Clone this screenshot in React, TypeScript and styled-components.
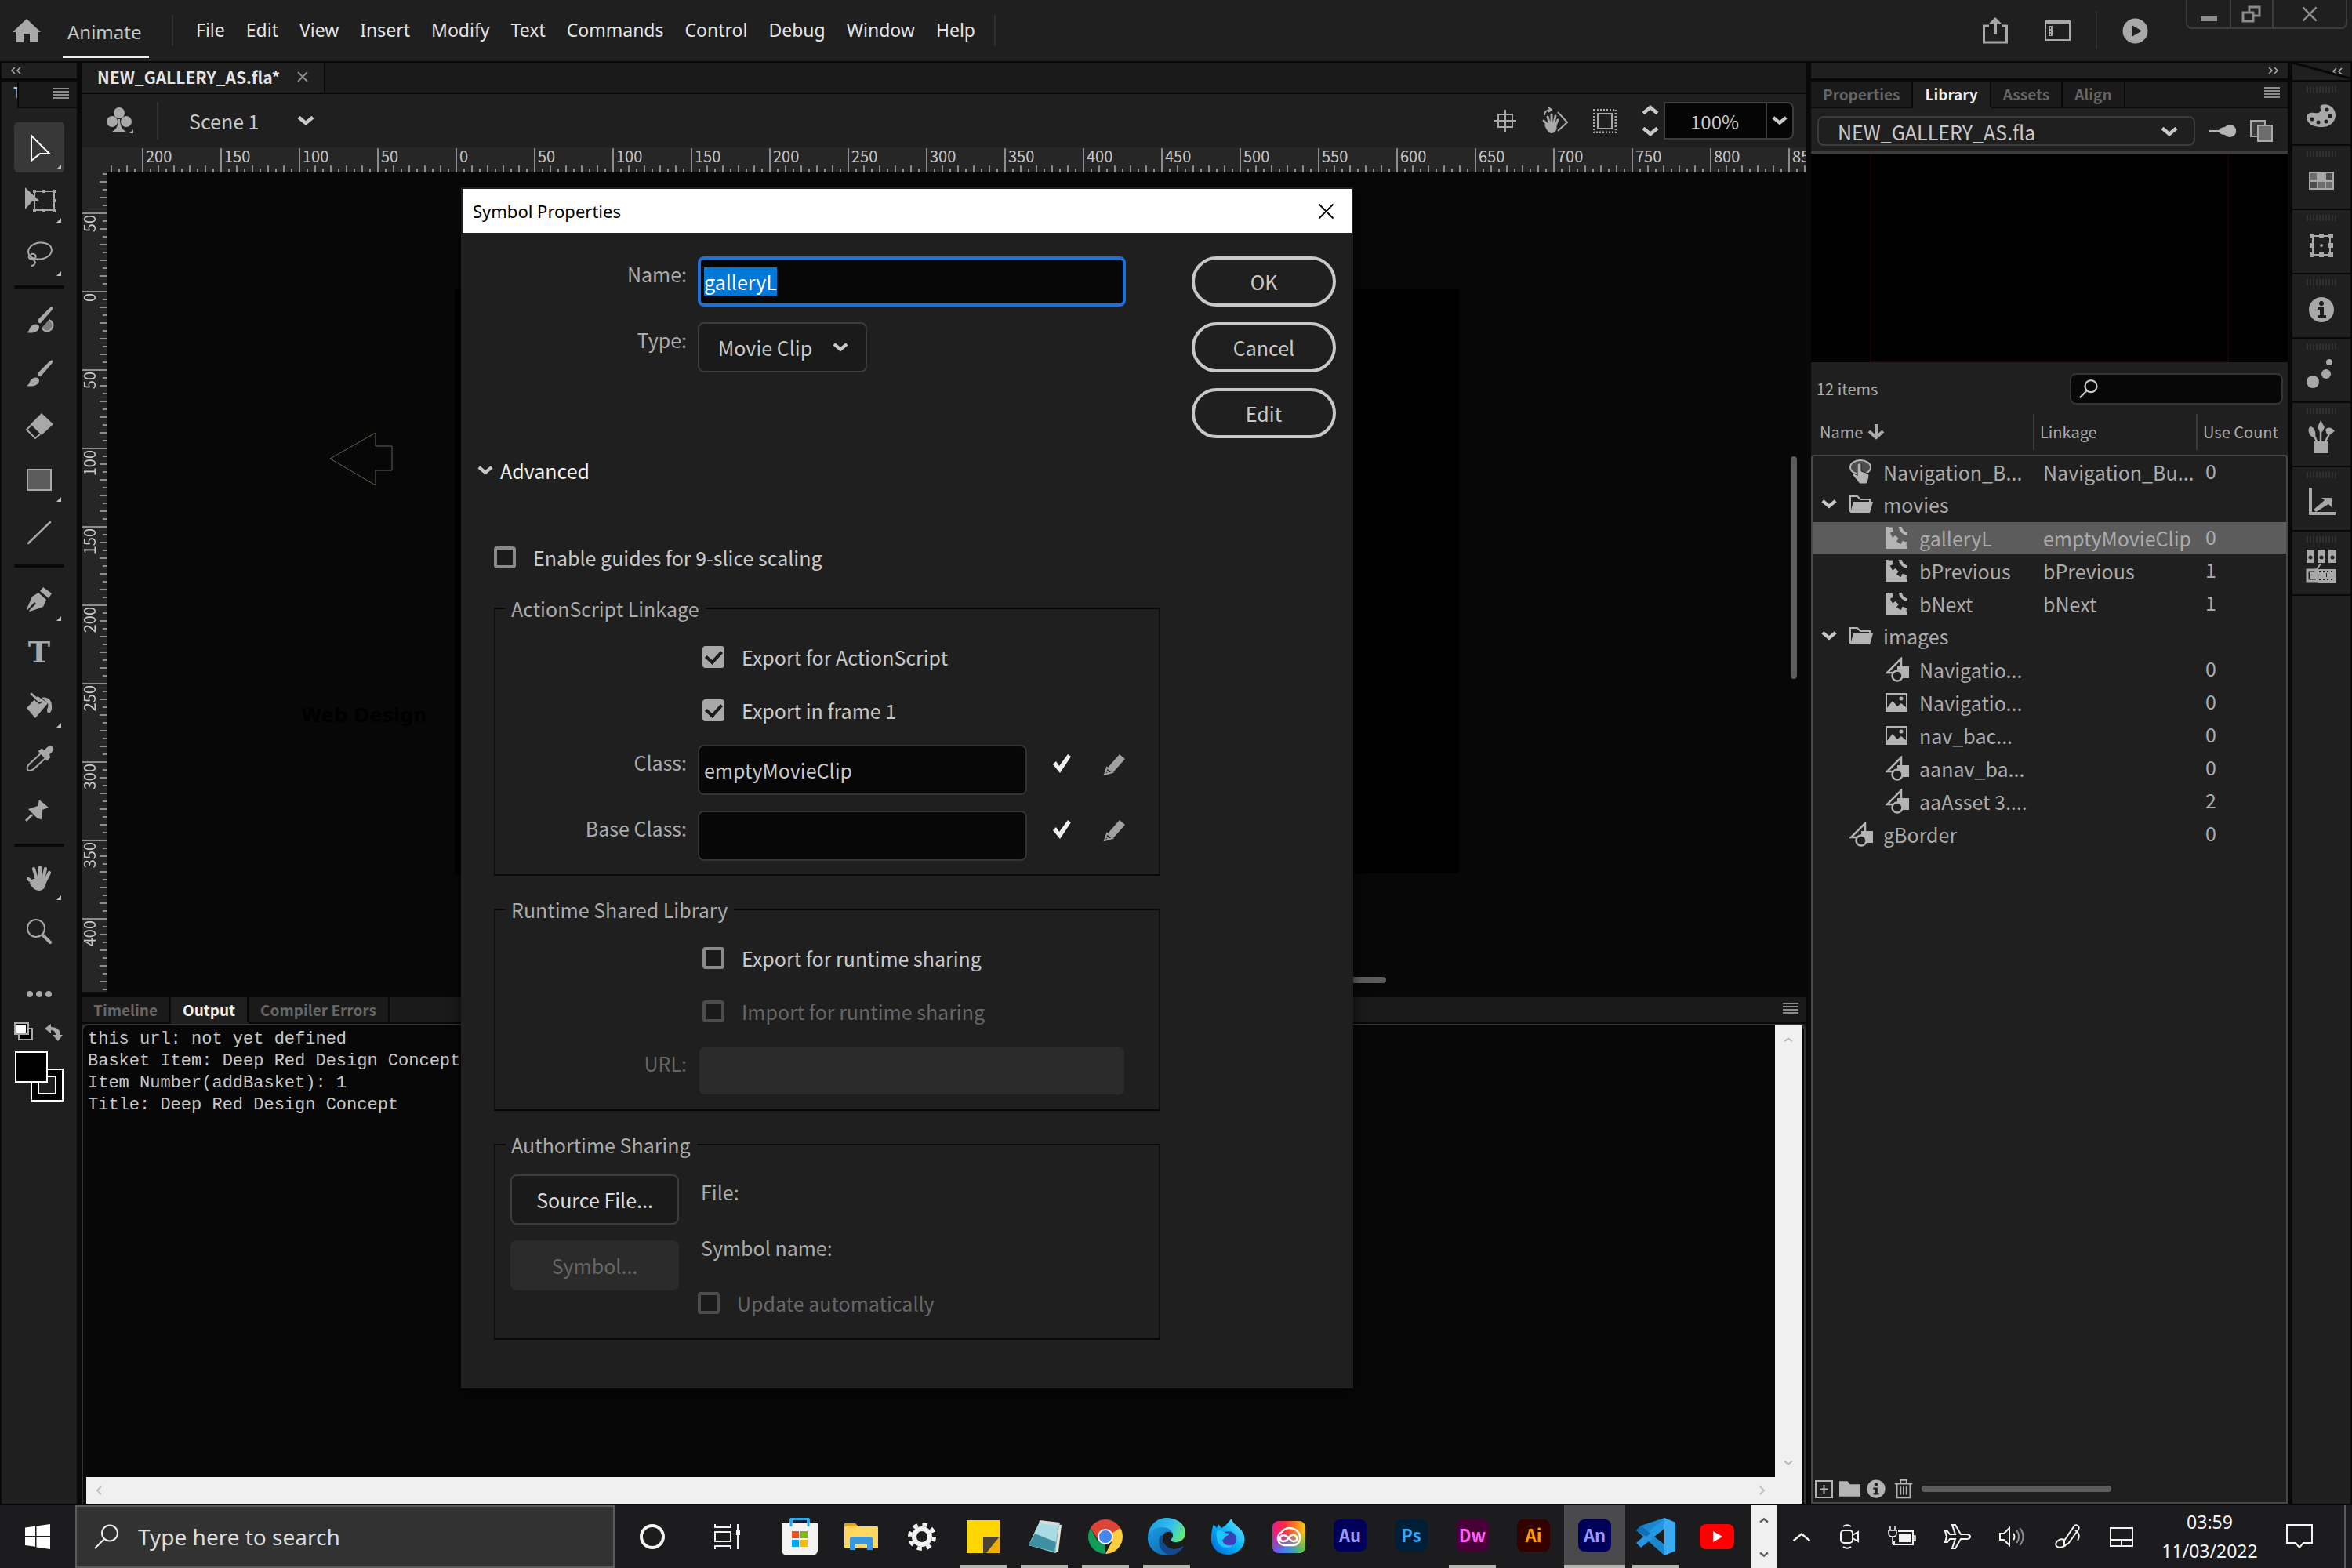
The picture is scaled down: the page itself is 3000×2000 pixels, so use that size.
import React, { useEffect, useId, useRef, useState } from 'react';
import styled, { createGlobalStyle, css } from 'styled-components';

const clean = '"Noto Sans CJK JP", "Open Sans", sans-serif';
const segoe = '"Noto Sans", "Open Sans", sans-serif';

const c = {
  panel: '#1f1f1f',
  strip: '#1a1a1a',
  gap: '#080808',
  line: '#3c3c3c',
  icon: '#a8a8a8',
  text: '#c8c8c8',
  dim: '#ababab',
  off: '#666666',
};

const Global = createGlobalStyle`
  * { box-sizing: border-box; }
  html, body, #root { margin: 0; height: 100%; background: ${c.gap}; }
  body { font-family: ${clean}; font-size: 25px; line-height: 36px; color: ${c.text}; overflow: hidden; }
  button, input, select { font: inherit; color: inherit; margin: 0; }
  button { background: none; border: 0; padding: 0; text-align: center; }
  svg { display: block; flex: none; }
`;

const Screen = styled.div`
  position: relative;
  display: flex;
  flex-direction: column;
  height: 100vh;
  min-width: 0;
`;

/* ---------- menu bar ---------- */

const MenuBar = styled.header`
  display: flex;
  align-items: center;
  height: 78px;
  flex: none;
  background: ${c.panel};
  padding-left: 16px;
  font-family: ${segoe};
`;
const AppName = styled.div`
  align-self: stretch;
  margin-left: 28px;
  padding: 4px 6px 0;
  width: 110px;
  border-bottom: 2px solid #f0f0f0;
  margin-bottom: 4px;
  font-size: 24px;
  line-height: 74px;
`;
const Rule = styled.i<{ $h: number; $gap?: number }>`
  width: 2px;
  height: ${p => p.$h}px;
  margin: 0 ${p => p.$gap ?? 29}px;
  background: #303030;
`;
const Menus = styled.nav`
  display: flex;
  gap: 27px;
  font-size: 23px;
  line-height: 32px;
  padding-bottom: 2px;
  color: #e4e4e4;
`;
const BarIcons = styled.div`
  display: flex;
  align-items: center;
  margin-left: auto;
`;
const IconButton = styled.button<{ $mr?: number }>`
  display: flex;
  align-items: center;
  justify-content: center;
  color: ${c.icon};
  margin-right: ${p => p.$mr ?? 0}px;
`;
const WindowButtons = styled.div`
  display: flex;
  align-self: flex-start;
  height: 37px;
  margin: 0 6px 0 48px;
  border: 2px solid ${c.line};
  border-top: 0;
  border-radius: 0 0 8px 8px;
`;
const WindowButton = styled.button<{ $w: number }>`
  display: flex;
  align-items: center;
  justify-content: center;
  width: ${p => p.$w}px;
  & + & { border-left: 2px solid ${c.line}; }
`;

/* ---------- workspace ---------- */

const Workspace = styled.main`
  display: flex;
  flex: 1;
  min-height: 0;
  gap: 6px;
  padding: 2px 2px;
`;
const ToolPanel = styled.aside`
  display: flex;
  flex-direction: column;
  width: 96px;
  flex: none;
  background: ${c.panel};
`;
const Collapse = styled.div<{ $end?: boolean }>`
  display: flex;
  align-items: center;
  justify-content: ${p => (p.$end ? 'flex-end' : 'flex-start')};
  height: 24px;
  flex: none;
  padding: 0 11px;
  border-bottom: 4px solid ${c.gap};
`;
const ToolTab = styled.div`
  display: flex;
  height: 34px;
  flex: none;
`;
const ToolTabName = styled.div`
  width: 20px;
  padding-left: 15px;
  overflow: hidden;
  font-size: 18px;
  line-height: 26px;
  font-weight: 700;
  color: #9cc4e4;
`;
const ToolTabMenu = styled.div`
  display: flex;
  flex: 1;
  justify-content: flex-end;
  padding: 8px 10px;
  background: ${c.strip};
  border: solid ${c.gap};
  border-width: 0 0 2px 2px;
`;
const Tools = styled.div`
  display: flex;
  flex-direction: column;
  align-items: center;
  padding: 16px 0 0;
`;
const Tool = styled.button<{ $on?: boolean }>`
  position: relative;
  width: 64px;
  height: 68px;
  color: ${p => (p.$on ? '#ffffff' : c.icon)};
  background: ${p => (p.$on ? 'linear-gradient(#383838, #383838) center / 64px 64px no-repeat' : 'none')};
  border-radius: 8px;
`;
const ToolLetter = styled.span`
  font: 700 38px/68px "DejaVu Serif", serif;
`;
const ToolRule = styled.hr`
  width: 64px;
  height: 4px;
  margin: 6px 0;
  border: 0;
  border-radius: 2px;
  background: ${c.gap};
`;
const MoreTools = styled.button`
  display: flex;
  gap: 4px;
  padding: 42px 0 32px;
  i { width: 8px; height: 8px; border-radius: 50%; background: ${c.icon}; }
`;

/* ---------- document ---------- */

const Center = styled.section`
  display: flex;
  flex-direction: column;
  flex: 1;
  min-width: 0;
  overflow: hidden;
`;
const DocTabs = styled.div`
  display: flex;
  height: 38px;
  flex: none;
  margin-bottom: 2px;
  background: ${c.strip};
`;
const DocTab = styled.div`
  display: flex;
  align-items: center;
  gap: 22px;
  padding: 0 20px 2px;
  background: ${c.panel};
  border-right: 2px solid ${c.gap};
  font-size: 21px;
  font-weight: 700;
  color: #e4e4e4;
`;
const EditBar = styled.div`
  display: flex;
  align-items: center;
  height: 68px;
  flex: none;
  padding: 0 16px 0 32px;
  background: ${c.panel};
`;
const SceneName = styled.span`
  margin: 0 49px 0 9px;
`;
const EditTools = styled.div`
  display: flex;
  align-items: center;
  gap: 32px;
  margin-left: auto;
`;
const Zoomer = styled.div`
  display: flex;
  align-items: center;
  height: 48px;
`;
const Spinner = styled.div`
  display: flex;
  flex-direction: column;
  gap: 16px;
  padding-right: 6px;
`;
const ZoomInput = styled.input`
  width: 132px;
  height: 48px;
  padding: 0 0 0 32px;
  border: 2px solid ${c.line};
  background: #050505;
  font-size: 24px;
`;
const ZoomDrop = styled.button`
  display: flex;
  align-items: center;
  justify-content: center;
  width: 34px;
  height: 48px;
  border: 2px solid ${c.line};
  border-left: 0;
  border-radius: 0 8px 8px 0;
  background: #050505;
`;
const tick = '#8c8c8c';
const RulerRow = styled.div`
  display: flex;
  height: 32px;
  flex: none;
  padding-left: 32px;
  background: #262626;
`;
const HRuler = styled.div`
  display: flex;
  flex: 1;
  min-width: 0;
  padding: 1px 0 0 45px;
  background:
    repeating-linear-gradient(to right, ${tick} 0 2px, transparent 2px 20px) 5px 100% / 100% 9px no-repeat,
    repeating-linear-gradient(to right, ${tick} 0 2px, transparent 2px 20px) 15px 100% / 100% 5px no-repeat;
  font-size: 20px;
  line-height: 20px;
`;
const HMark = styled.span`
  flex: 0 0 100px;
  padding-left: 3px;
  border-left: 2px solid ${tick};
`;
const CanvasRow = styled.div`
  display: flex;
  flex: 1;
  min-height: 0;
`;
const VRuler = styled.div`
  display: flex;
  flex-direction: column;
  width: 32px;
  flex: none;
  padding: 51px 0 0 1px;
  background:
    repeating-linear-gradient(to bottom, ${tick} 0 2px, transparent 2px 20px) 100% 11px / 9px 100% no-repeat,
    repeating-linear-gradient(to bottom, ${tick} 0 2px, transparent 2px 20px) 100% 1px / 5px 100% no-repeat,
    #262626;
  font-size: 20px;
  line-height: 18px;
`;
const VMark = styled.div`
  flex: 0 0 100px;
  border-top: 2px solid ${tick};
  span { display: block; width: 18px; writing-mode: vertical-rl; transform: rotate(180deg); padding-bottom: 1px; }
`;
const Canvas = styled.div`
  position: relative;
  flex: 1;
  overflow: hidden;
  background: #070707;
`;
const Stage = styled.div`
  position: absolute;
  left: 444px;
  top: 148px;
  width: 1281px;
  height: 746px;
  background: #000;
`;
const StageArrow = styled.svg`
  position: absolute;
  left: 283px;
  top: 330px;
`;
const StageText = styled.div`
  position: absolute;
  left: 248px;
  top: 676px;
  font: 700 24px/34px "DejaVu Sans", sans-serif;
  color: #000;
`;
const ScrollThumb = styled.i<{ $x: number; $y: number; $w: number; $h: number }>`
  position: absolute;
  left: ${p => p.$x}px;
  top: ${p => p.$y}px;
  width: ${p => p.$w}px;
  height: ${p => p.$h}px;
  border-radius: 4px;
  background: #5c5c5c;
`;

/* ---------- output panel ---------- */

const PanelTabs = styled.div`
  display: flex;
  height: 34px;
  flex: none;
  background: ${c.strip};
  border-bottom: 2px solid ${c.gap};
`;
const PanelTab = styled.button<{ $on?: boolean }>`
  padding: 0 15px;
  border-right: 2px solid ${c.gap};
  font-size: 19px;
  line-height: 28px;
  font-weight: 700;
  color: ${p => (p.$on ? '#f0f0f0' : c.off)};
  ${p => p.$on && css`background: ${c.panel}; box-shadow: 0 2px 0 ${c.panel};`}
`;
const PanelMenu = styled.button`
  margin: 0 10px 4px auto;
`;
const OutputPanel = styled.section`
  display: flex;
  flex-direction: column;
  height: 646px;
  margin-top: 7px;
  flex: none;
  background: ${c.panel};
`;
const OutputFrame = styled.div`
  display: grid;
  grid-template-columns: 1fr 34px;
  grid-template-rows: 1fr 34px;
  flex: 1;
  margin: 0 1px 0 0;
  padding-right: 3px;
  border: 2px solid #343434;
  border-bottom: 0;
  border-radius: 8px 8px 0 0;
  background: #070707;
`;
const OutputText = styled.pre`
  margin: 0;
  padding: 4px 6px;
  font: 22px/28px "Liberation Mono", monospace;
  color: #c8c8c8;
`;
const VTrack = styled.div`
  display: flex;
  flex-direction: column;
  justify-content: space-between;
  align-items: center;
  padding: 14px 0;
  background: #f0f0f0;
`;
const HTrack = styled.div`
  display: flex;
  justify-content: space-between;
  align-items: center;
  grid-column: 1 / 3;
  margin-left: 4px;
  padding: 0 46px 0 12px;
  background: #f0f0f0;
`;

/* ---------- library ---------- */

const Library = styled.aside`
  display: flex;
  flex-direction: column;
  width: 608px;
  flex: none;
  background: ${c.panel};
`;
const FileRow = styled.div`
  display: flex;
  align-items: center;
  gap: 18px;
  height: 54px;
  padding: 4px 18px 0 8px;
  color: ${c.icon};
`;
const SelectBox = styled.div<{ $w?: number; $h: number; $bg?: string }>`
  display: grid;
  grid-template-columns: 1fr 20px;
  align-items: center;
  flex: ${p => (p.$w ? 'none' : 1)};
  width: ${p => (p.$w ? p.$w + 'px' : 'auto')};
  height: ${p => p.$h}px;
  padding-right: 22px;
  border: 2px solid ${c.line};
  border-radius: 8px;
  background: ${p => p.$bg ?? 'none'};
  color: ${c.text};
  select {
    grid-area: 1 / 1 / 2 / 3;
    height: 100%;
    padding: 0 0 0 24px;
    border: 0;
    background: none;
    appearance: none;
  }
  svg { grid-area: 1 / 2; pointer-events: none; }
`;
const Preview = styled.div`
  height: 270px;
  flex: none;
  padding: 0 75px;
  border-top: 4px solid ${c.line};
  background: #000;
  div { height: 100%; border: solid #16000a; border-width: 0 2px 2px; }
`;
const FindRow = styled.div`
  display: flex;
  justify-content: space-between;
  align-items: center;
  height: 64px;
  margin-top: 2px;
  padding: 0 6px 0 7px;
  font-size: 20px;
  color: ${c.dim};
`;
const Find = styled.label`
  display: flex;
  align-items: center;
  width: 272px;
  height: 40px;
  padding-left: 10px;
  border: 2px solid #343434;
  border-radius: 8px;
  background: #070707;
  color: #c8c8c8;
  input { flex: 1; min-width: 0; border: 0; background: none; }
`;
const LibTable = styled.table`
  display: flex;
  flex-direction: column;
  flex: 1;
  min-height: 0;
  color: ${c.dim};
  thead, tbody { display: block; }
  tbody { flex: 1; border: solid #484848; border-width: 2px 2px 0; border-radius: 4px 4px 0 0; }
`;
const HeadRow = styled.tr`
  display: grid;
  grid-template-columns: 283px 208px 1fr;
  padding: 0 0 6px;
  font-size: 20px;
  line-height: 46px;
  th { display: flex; align-items: center; gap: 6px; height: 46px; padding: 0 0 0 7px; font-weight: 400; }
  th + th { border-left: 2px solid ${c.line}; }
  th:first-child { padding-left: 11px; }
`;
const Item = styled.tr<{ $on?: boolean }>`
  display: grid;
  grid-template-columns: 294px 207px 1fr;
  align-items: center;
  height: 40px;
  margin-bottom: 2px;
  background: ${p => (p.$on ? '#5c5c5c' : 'none')};
  td { padding: 0 0 2px; white-space: nowrap; }
  td:last-child { padding-bottom: 6px; }
`;
const ItemName = styled.div<{ $depth: number }>`
  display: flex;
  align-items: center;
  padding-left: ${p => 11 + p.$depth * 46}px;
`;
const Twist = styled.span`
  display: flex;
  width: 36px;
`;
const ItemIcon = styled.span`
  display: flex;
  width: 43px;
  color: #b4b4b4;
`;
const LibFooter = styled.div`
  display: flex;
  align-items: center;
  gap: 8px;
  height: 36px;
  flex: none;
  padding: 0 3px;
  border: solid #484848;
  border-width: 0 2px 2px;
  color: #b4b4b4;
`;
const FooterThumb = styled.i`
  width: 242px;
  height: 8px;
  border-radius: 4px;
  background: #5c5c5c;
`;
const Dock = styled.aside`
  display: flex;
  flex-direction: column;
  width: 74px;
  flex: none;
`;
const DockHead = styled.div`
  position: relative;
  display: flex;
  align-items: center;
  justify-content: flex-end;
  height: 22px;
  flex: none;
  margin-bottom: 2px;
  padding-right: 10px;
  background: ${c.panel};
`;
const DockLine = styled.svg`
  position: absolute;
  right: 0;
  top: 0;
`;
const DockButton = styled.button`
  display: flex;
  flex-direction: column;
  align-items: center;
  height: 80px;
  flex: none;
  margin-bottom: 2px;
  padding-top: 6px;
  background: ${c.panel};
  color: ${c.icon};
  &::before {
    content: '';
    width: 38px;
    height: 8px;
    margin-bottom: 7px;
    background: repeating-linear-gradient(to right, #303030 0 2px, transparent 2px 4px);
  }
`;
const DockRest = styled.div`
  flex: 1;
  background: ${c.panel};
`;

/* ---------- dialog ---------- */

const Dialog = styled.form`
  position: absolute;
  left: 588px;
  top: 239px;
  width: 1138px;
  background: ${c.panel};
  border: 2px solid ${c.panel};
  box-shadow: 0 4px 16px rgba(0, 0, 0, 0.6);
`;
const DialogTitle = styled.div`
  display: flex;
  align-items: center;
  justify-content: space-between;
  height: 56px;
  padding: 0 22px 0 13px;
  background: #fff;
  color: #000;
  font-family: ${segoe};
  font-size: 22px;
`;
const DialogBody = styled.div`
  display: flex;
  justify-content: space-between;
  padding: 30px 20px 60px 0;
`;
const DialogMain = styled.div`
  width: 890px;
`;
const Actions = styled.div`
  display: flex;
  flex-direction: column;
  gap: 20px;
`;
const Pill = styled.button`
  width: 184px;
  height: 64px;
  border: 4px solid #c8c8c8;
  border-radius: 32px;
`;
const Field = styled.div<{ $top?: number }>`
  display: flex;
  align-items: center;
  margin-top: ${p => p.$top ?? 0}px;
`;
const FieldLabel = styled.label<{ $w: number; $off?: boolean }>`
  width: ${p => p.$w}px;
  margin-right: 14px;
  padding-bottom: 20px;
  text-align: right;
  color: ${p => (p.$off ? c.off : c.dim)};
`;
const TextBox = styled.input<{ $w: number }>`
  width: ${p => p.$w}px;
  height: 64px;
  padding: 0 6px;
  border: 2px solid #343434;
  border-radius: 8px;
  outline: 0;
  background: #070707;
  &:disabled { border-color: ${c.panel}; background: #2b2b2b; }
  &::selection { background: #0078d7; color: #fff; }
`;
const NameBox = styled(TextBox)`
  padding: 0 4px;
  border: 4px solid #1f6fdc;
`;
const Disclosure = styled.button`
  display: flex;
  align-items: center;
  gap: 9px;
  margin: 107px 0 75px 19px;
  color: #f0f0f0;
`;
const Check = styled.label<{ $left?: number; $off?: boolean }>`
  display: flex;
  align-items: center;
  gap: 22px;
  margin-left: ${p => p.$left ?? 0}px;
  color: ${p => (p.$off ? c.off : c.text)};
  input {
    display: flex;
    align-items: center;
    justify-content: center;
    width: 28px;
    height: 28px;
    appearance: none;
    border: 4px solid ${p => (p.$off ? '#4c4c4c' : '#8a8a8a')};
    border-radius: 4px;
    background: ${c.strip};
  }
  input:checked { border-color: #a8a8a8; background: #a8a8a8; }
  input:checked::after {
    content: '';
    width: 9px;
    height: 16px;
    margin-bottom: 4px;
    border: solid ${c.strip};
    border-width: 0 4px 4px 0;
    transform: rotate(42deg);
  }
`;
const Groups = styled.div`
  display: flex;
  flex-direction: column;
  gap: 25px;
  margin: 29px 0 0 40px;
`;
const Group = styled.fieldset`
  display: flex;
  flex-direction: column;
  width: 850px;
  margin: 0;
  padding: 26px 0 17px;
  border: 2px solid ${c.gap};
  min-width: 0;
  legend { margin-left: 13px; padding: 0 8px 0 7px; color: ${c.dim}; }
`;
const Checks = styled.div`
  display: flex;
  flex-direction: column;
  gap: 32px;
  margin-bottom: 26px;
`;
const FieldIcons = styled.span`
  display: flex;
  gap: 40px;
  margin: 0 0 14px 31px;
`;
const Share = styled.div`
  display: flex;
  gap: 24px;
  margin: -6px 0 0 19px;
  padding-bottom: 10px;
`;
const ShareButtons = styled.div`
  display: flex;
  flex-direction: column;
  gap: 20px;
`;
const BoxButton = styled.button`
  width: 215px;
  height: 64px;
  border: 2px solid ${c.line};
  border-radius: 8px;
  background: ${c.strip};
  color: #dcdcdc;
  &:disabled { border-color: #2b2b2b; background: #2b2b2b; color: ${c.off}; }
`;
const ShareInfo = styled.div`
  display: flex;
  flex-direction: column;
  gap: 35px;
  padding-top: 4px;
  p { margin: 0 4px; color: ${c.dim}; }
`;

/* ---------- taskbar ---------- */

const Taskbar = styled.footer`
  display: flex;
  height: 80px;
  flex: none;
  background: #1c1c1e;
  font-family: ${segoe};
  color: #f4f4f4;
`;
const Start = styled.button<{ $w: number }>`
  display: flex;
  align-items: center;
  justify-content: center;
  width: ${p => p.$w}px;
`;
const SearchBox = styled.label`
  display: flex;
  align-items: center;
  gap: 24px;
  width: 688px;
  padding-left: 22px;
  border: 2px solid #5a5a5a;
  background: #323232;
  input { flex: 1; border: 0; padding: 0; background: none; font-size: 28px; }
  input::placeholder { color: #dcdcdc; opacity: 1; }
`;
const Apps = styled.div`
  display: flex;
  padding-left: 5px;
`;
const AppButton = styled.button<{ $run?: boolean; $on?: boolean }>`
  display: flex;
  align-items: center;
  justify-content: center;
  width: 78px;
  background: ${p => (p.$on ? '#4a4a4c' : 'none')};
  ${p => p.$run && css`background-image: linear-gradient(#b8b4b0, #b8b4b0); background-size: ${p.$on ? '78px' : '60px'} 4px; background-position: 50% 100%; background-repeat: no-repeat;`}
`;
const Adobe = styled.span<{ $bg: string; $fg: string }>`
  width: 42px;
  height: 41px;
  border-radius: 8px;
  margin-bottom: 4px;
  background: ${p => p.$bg};
  color: ${p => p.$fg};
  font: 700 22px/38px ${clean};
`;
const Scroller = styled.div`
  display: flex;
  flex-direction: column;
  justify-content: space-between;
  align-items: center;
  width: 34px;
  margin-left: 4px;
  padding: 15px 0 13px;
  background: #f0f0f0;
`;
const Tray = styled.div`
  display: flex;
  align-items: center;
  flex: 1;
  justify-content: space-between;
  padding: 0 40px 0 18px;
`;
const Clock = styled.time`
  font-size: 23px;
  line-height: 37px;
  text-align: center;
`;
const ShowDesktop = styled.i`
  width: 10px;
  border-left: 2px solid #5a5a5a;
`;

/* ---------- drawings ---------- */

const Chevron = ({ w = 22, h = 12, s = 4.6, up, color = '#c8c8c8' }: { w?: number; h?: number; s?: number; up?: boolean; color?: string }) => (
  <svg width={w} height={h} viewBox="0 0 22 12" fill="none" stroke={color} strokeWidth={s}>
    <path d={up ? 'M2 10.5 11 3l9 7.5' : 'M2 1.5 11 9l9-7.5'} />
  </svg>
);
const Side = ({ right, color = '#c0c0c0' }: { right?: boolean; color?: string }) => (
  <svg width="9" height="12" viewBox="0 0 9 12" fill="none" stroke={color} strokeWidth="2">
    <path d={right ? 'M2 1l5 5-5 5' : 'M7 1 2 6l5 5'} />
  </svg>
);
const Double = ({ right }: { right?: boolean }) => (
  <svg width="14" height="10" viewBox="0 0 14 10" fill="none" stroke="#a8a8a8" strokeWidth="1.6">
    <path d={right ? 'M1 1l4 4-4 4M8 1l4 4-4 4' : 'M6 1 2 5l4 4M13 1 9 5l4 4'} />
  </svg>
);
const Burger = () => (
  <svg width="20" height="14" viewBox="0 0 20 14" fill="#8c8c8c"><path d="M0 0h20v2H0zM0 4h20v2H0zM0 8h20v2H0zM0 12h20v2H0z" /></svg>
);
const Cross = ({ s = 14, w = 2, color = '#8c8c8c' }: { s?: number; w?: number; color?: string }) => (
  <svg width={s} height={s} viewBox="0 0 14 14" fill="none" stroke={color} strokeWidth={w}><path d="M1 1l12 12M13 1 1 13" /></svg>
);
const Loupe = ({ s = 32, color = '#f0f0f0', w = 2 }: { s?: number; color?: string; w?: number }) => (
  <svg width={s} height={s} viewBox="0 0 32 32" fill="none" stroke={color} strokeWidth={w}><circle cx="20" cy="11.5" r="10" /><path d="M13 19 1 31" /></svg>
);
const InfoDot = ({ s }: { s: number }) => (
  <svg width={s} height={s} viewBox="0 0 32 32"><circle cx="16" cy="16" r="15.5" fill="currentColor" /><g fill="#1f1f1f"><circle cx="16" cy="8.5" r="3" /><path d="M11 14h7.500v9H21v3H11v-3h2.500v-6H11z" /></g></svg>
);

const ToolArt = ({ fly, children }: { fly?: boolean; children?: React.ReactNode }) => (
  <svg width="64" height="68" viewBox="0 0 64 68" fill="none" stroke="currentColor" strokeWidth="2">
    {children}
    {fly && <path d="M60 56v6h-6z" fill="#c0c0c0" stroke="none" />}
  </svg>
);
const brushHandle = 'M49 18c-1-1-3 0-5 2L30 34c-1 2 2 5 4 4l13-15c2-2 3-4 2-5z';
const brushHead = 'M32 43c0 6-8 9-16 7 4-2 3-5 6-8 4-4 10-3 10 1z';

const groups: { name: string; on?: boolean; art: React.ReactNode }[][] = [
  [
    { name: 'Selection', on: true, art: <ToolArt fly><path d="M22 19l23 23H33l-11 9z" /></ToolArt> },
    {
      name: 'Free transform',
      art: (
        <ToolArt fly>
          <path d="M26 22h25v24H26z" />
          <path d="M14 17l19 18H23l-9 10z" fill="currentColor" stroke="none" />
          <path d="M24 20h4v4h-4zM36 20h4v4h-4zM49 20h4v4h-4zM49 32h4v4h-4zM24 44h4v4h-4zM36 44h4v4h-4zM49 44h4v4h-4z" fill="currentColor" stroke="none" />
        </ToolArt>
      ),
    },
    { name: 'Lasso', art: <ToolArt fly><ellipse cx="33" cy="30" rx="15" ry="10.500" transform="rotate(-8 33 30)" /><path d="M19 36c-2 4 5 7 8 3s-5-8-6-3 9 6 5 11c-1 2-3 2-4 2" /></ToolArt> },
  ],
  [
    { name: 'Fluid brush', art: <ToolArt><circle cx="42" cy="41" r="7.500" fill="#7c7c7c" /><path d="M28 46 50 22" stroke="#1f1f1f" strokeWidth="8" /><g fill="currentColor" stroke="none"><path d={brushHandle} /><path d={brushHead} /></g></ToolArt> },
    { name: 'Brush', art: <ToolArt><g fill="currentColor" stroke="none"><path d={brushHandle} /><path d={brushHead} /></g></ToolArt> },
    { name: 'Eraser', art: <ToolArt><path d="M35 17l15 14-15 14-14-14z" fill="currentColor" stroke="none" /><path d="M22 32l-6 6 11 11 6-5" /></ToolArt> },
    { name: 'Rectangle', art: <ToolArt fly><path d="M17 21h30v26H17z" fill="#5c5c5c" /></ToolArt> },
    { name: 'Line', art: <ToolArt><path d="M18 47l28-27" strokeWidth="2.500" strokeLinecap="round" /></ToolArt> },
  ],
  [
    { name: 'Pen', art: <ToolArt fly><g fill="currentColor" stroke="none"><path d="M37 19l11 8-4 6-11-9z" /><path d="M31 26l10 9-4 9-17 6-1-1 9-9-2-2-9 10-1-1 7-16z" /></g></ToolArt> },
    { name: 'Text', art: <ToolLetter>T</ToolLetter> },
    { name: 'Paint bucket', art: <ToolArt fly><g fill="currentColor" stroke="none"><path d="M30 22l13 9-16 19-11-13z" /><path d="M35 24c8-2 14 3 13 13 0 8-7 8-6 2 1-3 2-5 1-8z" /></g><path d="M22 19l9 8" strokeWidth="3" strokeLinecap="round" /><path d="M25 25l7 6 4-2" stroke="#1f1f1f" strokeWidth="1.500" /></ToolArt> },
    { name: 'Eyedropper', art: <ToolArt><path d="M34 27 18 42c-2 3-2 7 2 7 3 0 4-1 6-3l15-14" /><path d="M32 24l3-2 4 2c3-4 6-7 9-5s0 6-4 9l1 4-3 3z" fill="currentColor" /></ToolArt> },
    { name: 'Asset warp', art: <ToolArt><path d="M32 18l12 10-8 3-1 12-5-1-12-12 12-4z" fill="currentColor" stroke="none" /><path d="M23 37l-8 8" strokeWidth="3" /></ToolArt> },
  ],
  [
    { name: 'Hand', art: <ToolArt fly><g strokeLinecap="round" strokeWidth="4.200"><path d="M18 35l8 6M25 22l4 14M33 20v14M40 22l-3 14M45 27l-6 12" /></g><path d="M24 35l16-1c2 6 0 16-8 16-5 0-10-4-12-10z" fill="currentColor" stroke="none" /></ToolArt> },
    { name: 'Zoom', art: <ToolArt><circle cx="28" cy="30" r="11" /><path d="M37 39l9 9" strokeWidth="4" strokeLinecap="round" /></ToolArt> },
  ],
];

/* a gear bitten out of a solid square, its hub in the top right corner */
const Clip = () => {
  const id = useId();
  return (
    <svg width="28" height="28" viewBox="0 0 28 28">
      <mask id={id} maskUnits="userSpaceOnUse" x="0" y="0" width="28" height="28">
        <path d="M0 0h28v28H0z" fill="#fff" />
        <g fill="none" stroke="#000">
          <circle cx="30" cy="-2" r="17.500" strokeWidth="8" />
          <circle cx="30" cy="-2" r="23" strokeWidth="6" strokeDasharray="6 6.040" strokeDashoffset="3" />
        </g>
        <circle cx="30" cy="-2" r="9.500" fill="#000" />
      </mask>
      <path d="M0 0h28v28H0z" fill="currentColor" mask={`url(#${id})`} />
    </svg>
  );
};
const Shapes = () => (
  <svg width="32" height="32" viewBox="0 0 32 32" fill="none" stroke="currentColor" strokeWidth="2.500">
    <path d="M20 2v18H2z" />
    <path d="M15 12h15v15H15z" fill="currentColor" stroke="none" />
    <circle cx="15" cy="24" r="6.500" fill="#1f1f1f" />
  </svg>
);
const Bitmap = () => (
  <svg width="28" height="24" viewBox="0 0 28 24">
    <path d="M1 1h26v22H1z" fill="none" stroke="currentColor" strokeWidth="2" />
    <path d="M1 20l8-10 6 7 5-4 7 6v4H1z" fill="currentColor" />
    <circle cx="20" cy="7" r="2.500" fill="currentColor" />
  </svg>
);
const Folder = () => (
  <svg width="30" height="23" viewBox="0 0 30 23">
    <path d="M1 21V1h9l4 4h12v4" fill="none" stroke="currentColor" strokeWidth="2" />
    <path d="M5 8h25l-4 14H1z" fill="currentColor" />
  </svg>
);
const ButtonSymbol = () => (
  <svg width="28" height="32" viewBox="0 0 28 32">
    <ellipse cx="14" cy="10" rx="13" ry="9" fill="#4c4c4c" stroke="currentColor" strokeWidth="2" />
    <path d="M10 7c0-3 5-3 5 0v8l9 3c2 3 0 8-2 13h-9L4 20c0-3 4-2 6 1z" fill="currentColor" stroke="#1f1f1f" />
  </svg>
);

type Kind = 'button' | 'folder' | 'clip' | 'shape' | 'bitmap';
const art: Record<Kind, React.ReactNode> = { button: <ButtonSymbol />, folder: <Folder />, clip: <Clip />, shape: <Shapes />, bitmap: <Bitmap /> };
const items: { name: string; kind: Kind; depth: number; link?: string; uses?: number; on?: boolean }[] = [
  { name: 'Navigation_B...', kind: 'button', depth: 0, link: 'Navigation_Bu...', uses: 0 },
  { name: 'movies', kind: 'folder', depth: 0 },
  { name: 'galleryL', kind: 'clip', depth: 1, link: 'emptyMovieClip', uses: 0, on: true },
  { name: 'bPrevious', kind: 'clip', depth: 1, link: 'bPrevious', uses: 1 },
  { name: 'bNext', kind: 'clip', depth: 1, link: 'bNext', uses: 1 },
  { name: 'images', kind: 'folder', depth: 0 },
  { name: 'Navigatio...', kind: 'shape', depth: 1, uses: 0 },
  { name: 'Navigatio...', kind: 'bitmap', depth: 1, uses: 0 },
  { name: 'nav_bac...', kind: 'bitmap', depth: 1, uses: 0 },
  { name: 'aanav_ba...', kind: 'shape', depth: 1, uses: 0 },
  { name: 'aaAsset 3....', kind: 'shape', depth: 1, uses: 2 },
  { name: 'gBorder', kind: 'shape', depth: 0, uses: 0 },
];

const DockArt = ({ children }: { children: React.ReactNode }) => (
  <svg width="40" height="48" viewBox="0 0 40 48" fill="currentColor">{children}</svg>
);
const dock: { name: string; art: React.ReactNode }[] = [
  { name: 'Color', art: <DockArt><path d="M20 9c8-3 18 3 18 13 0 9-9 16-19 15C9 37 1 32 1 25c0-6 6-7 10-6 5 1 9-1 8-5-1-2-1-4 1-5z" /><g fill="#1f1f1f"><circle cx="8" cy="27" r="2.500" /><circle cx="16" cy="31" r="2.500" /><circle cx="26" cy="30" r="2.500" /><circle cx="31" cy="23" r="2.500" /><circle cx="27" cy="15" r="2.500" /></g></DockArt> },
  { name: 'Swatches', art: <DockArt><path d="M4 12h32v23H4z" /><g fill="#6c6c6c"><path d="M6 14h8v8H6zM16 25h8v8h-8zM26 25h8v8h-8z" /></g><g fill="#4c4c4c"><path d="M26 14h8v8h-8zM6 25h8v8H6z" /></g></DockArt> },
  { name: 'Transform', art: <DockArt><path d="M9 12h22v24H9z" fill="none" stroke="currentColor" strokeWidth="2" /><path d="M5 9h6v6H5zM17 9h6v6h-6zM29 9h6v6h-6zM5 21h6v6H5zM29 21h6v6h-6zM5 33h6v6H5zM17 33h6v6h-6zM29 33h6v6h-6z" /><circle cx="20" cy="24" r="2" /></DockArt> },
  { name: 'Info', art: <DockArt><circle cx="20" cy="24" r="16" /><g fill="#1f1f1f"><circle cx="20" cy="16" r="3" /><path d="M15 21h8v10h3v3H15v-3h3v-7h-3z" /></g></DockArt> },
  { name: 'Brush library', art: <DockArt><circle cx="9" cy="34" r="8" /><circle cx="26" cy="24" r="6" /><circle cx="30" cy="9" r="4" /></DockArt> },
  { name: 'Brushes', art: <DockArt><path d="M11 28h18v15H11z" /><path d="M14 28 8 14M19 28V10M25 28l7-13" stroke="currentColor" strokeWidth="2.500" /><ellipse cx="8" cy="16" rx="4" ry="7" transform="rotate(-20 8 16)" /><path d="M15 10l4-9 5 9-3 6h-3z" /><path d="M25 13c4-5 9-2 12 2-3 1-5 6-10 4z" /></DockArt> },
  { name: 'Motion', art: <DockArt><path d="M4 5h4v31h30v4H4z" /><path d="M10 33 24 21l-4-3h13v12l-4-4-16 10z" /></DockArt> },
  { name: 'Frame picker', art: <DockArt><path d="M1 2h10v17H1zM15 2h10v17H15zM29 2h10v17H29z" /><path d="M2 28h12v14H2z" fill="none" stroke="currentColor" strokeWidth="3" /><path d="M15 27h24v17H15zM5 31h8v8H5z" /><g fill="#1f1f1f"><circle cx="6" cy="12" r="2.500" /><circle cx="20" cy="12" r="2.500" /><circle cx="34" cy="12" r="2.500" /><path d="M17 29h2v2h-2zM22 29h2v2h-2zM27 29h2v2h-2zM32 29h2v2h-2zM17 39h2v2h-2zM22 39h2v2h-2zM27 39h2v2h-2zM32 39h2v2h-2zM26 32h1v5h-1z" /></g><path d="M8 36l11-16" stroke="currentColor" strokeWidth="2" /></DockArt> },
];

const CheckMark = () => (
  <svg width="26" height="26" viewBox="0 0 26 26"><path d="M2 14l4-4 4 6L21 1l4 3-14 21z" fill="#f0f0f0" /></svg>
);
const Pencil = () => (
  <svg width="28" height="28" viewBox="0 0 28 28"><path d="M21 1l7 6-15 17-7-6z" fill="#a0a0a0" /><path d="M5 18l7 6-10 3zM4 22l3 3" fill="none" stroke="#a0a0a0" strokeWidth="2" /></svg>
);

const mono = { fill: 'none', stroke: '#f4f4f4', strokeWidth: 2 };
const Chrome = () => (
  <svg width="44" height="44" viewBox="0 0 44 44">
    <path d="M22 22 3 11a22 22 0 0 1 38 0z" fill="#db4437" />
    <path d="M22 22v22A22 22 0 0 1 3 11l9 17z" fill="#0f9d58" />
    <path d="M22 22 41 11a22 22 0 0 1-19 33l9-17z" fill="#ffcd40" />
    <path d="M3 11l10 16 5-15h23A22 22 0 0 0 3 11z" fill="#db4437" />
    <circle cx="22" cy="22" r="10" fill="#f4f4f4" /><circle cx="22" cy="22" r="8" fill="#4285f4" />
  </svg>
);
const Edge = () => (
  <svg width="48" height="48" viewBox="0 0 48 48">
    <defs>
      <linearGradient id="edgeTop" x1="0" y1="0.3" x2="1" y2="0.6"><stop offset="0" stopColor="#1b9de2" /><stop offset="0.600" stopColor="#35c1f1" /><stop offset="1" stopColor="#66eb6e" /></linearGradient>
      <linearGradient id="edgeLow" x1="0" y1="0" x2="1" y2="1"><stop offset="0" stopColor="#1b9de2" /><stop offset="1" stopColor="#0c59a4" /></linearGradient>
    </defs>
    <path d="M0 24C1 10 11 0 24 0c14 0 24 9 24 19 0 8-6 12-12 12-5 0-7-2-6-4 2-2 2-3 2-5 0-4-4-8-10-8C10 14 1 19 0 24z" fill="url(#edgeTop)" />
    <path d="M0 24c1-6 9-12 18-12 8 0 13 4 14 9-2-4-8-4-11-1-6 7 0 19 12 20 5 0 8-1 12-4 0 4-9 12-21 12C10 48-1 37 0 24z" fill="url(#edgeLow)" />
    <path d="M15 25c-3 10 3 20 13 23 7 0 14-5 17-11-4 2-8 3-12 3-10-1-16-9-14-18-2 0-3 1-4 3z" fill="#114a8b" />
  </svg>
);
const Firefox = () => (
  <svg width="44" height="46" viewBox="0 0 44 46">
    <defs><linearGradient id="fox" x1="1" y1="0" x2="0" y2="1"><stop offset="0" stopColor="#80ebff" /><stop offset="0.500" stopColor="#00b3f4" /><stop offset="1" stopColor="#0060df" /></linearGradient></defs>
    <path d="M27 0c1 8 14 12 16 22 3 13-8 24-21 24S0 36 1 24c0-6 1-12 3-17l4 5 2-5 4 5c5-2 9-8 13-12z" fill="url(#fox)" />
    <circle cx="23" cy="26" r="10" fill="#3a3fb8" />
    <path d="M8 16c3-2 7-1 10 2l6 1c-1 3-5 3-6 5s-1 2-3 3c1 6 8 9 14 6-5 8-19 4-21-7 0-4-1-7 0-10z" fill="#20c4fb" />
  </svg>
);

const taskApps: { name: string; art: React.ReactNode; run?: boolean; on?: boolean }[] = [
  { name: 'Store', art: <svg width="46" height="48" viewBox="0 0 46 48"><path d="M12 13V3c0-2 1-2 2-2h18c2 0 2 1 2 2v10" fill="none" stroke="#2ba8f0" strokeWidth="4" /><path d="M0 7h46v34c0 4-3 7-7 7H7c-4 0-7-3-7-7z" fill="#f4f4f4" /><path d="M12 3v8M34 3v8" stroke="#2ba8f0" strokeWidth="3" /><path d="M13 17h9v9h-9z" fill="#f25022" /><path d="M24 17h9v9h-9z" fill="#7fba00" /><path d="M13 28h9v9h-9z" fill="#00a4ef" /><path d="M24 28h9v9h-9z" fill="#ffb900" /></svg> },
  { name: 'Explorer', art: <svg width="44" height="34" viewBox="0 0 44 34"><path d="M1 0h14l4 4v4H1z" fill="#e8a100" /><path d="M1 4h41c2 0 2 1 2 2v26H3c-2 0-2-1-2-2z" fill="#ffd660" /><path d="M8 34V20c0-2 1-3 3-3h23c2 0 3 1 3 3v14h-7v-8H15v8z" fill="#3a96dd" /></svg> },
  { name: 'Settings', art: <svg width="38" height="38" viewBox="0 0 38 38" fill="none" stroke="#f4f4f4"><circle cx="19" cy="19" r="10" strokeWidth="6" /><circle cx="19" cy="19" r="15.500" strokeWidth="5" strokeDasharray="6.090 6.090" /></svg> },
  { name: 'Sticky Notes', run: true, art: <svg width="42" height="42" viewBox="0 0 42 42"><path d="M0 0h42v42H0z" fill="#ffd500" /><path d="M21 21h21v0L25 42h-4z" fill="#4a4336" /><path d="M42 21v21H26z" fill="#f0ad00" /></svg> },
  { name: 'Notepad', run: true, art: <svg width="44" height="44" viewBox="0 0 44 44"><path d="M16 3l28 4-8 36L2 33z" fill="#7cb9c6" /><path d="M16 3l24 4-5 34L2 33z" fill="#a8dbe4" /><path d="M10 18 2 33l33 8 2-12z" fill="#3f8fa3" /><path d="M16 1l26 3-1 4-26-3z" fill="#d8dcdc" /><path d="M44 7l-4 34-4 2 5-36z" fill="#e8e4d4" /></svg> },
  { name: 'Chrome', run: true, art: <Chrome /> },
  { name: 'Edge', run: true, art: <Edge /> },
  { name: 'Firefox', art: <Firefox /> },
  {
    name: 'Creative Cloud',
    art: (
      <svg width="42" height="41" viewBox="0 0 42 41">
        <defs>
          <linearGradient id="ccTop" x1="0" y1="0" x2="1" y2="0"><stop offset="0" stopColor="#f0188c" /><stop offset="0.400" stopColor="#f5333f" /><stop offset="0.750" stopColor="#ff8a1c" /><stop offset="1" stopColor="#f4d01c" /></linearGradient>
          <linearGradient id="ccLow" x1="0" y1="0" x2="1" y2="0"><stop offset="0" stopColor="#7a4be0" /><stop offset="0.450" stopColor="#3a8cf0" /><stop offset="1" stopColor="#5cc83c" /></linearGradient>
          <linearGradient id="ccFade" x1="0" y1="0" x2="0" y2="1"><stop offset="0.350" stopColor="#000" /><stop offset="0.900" stopColor="#fff" /></linearGradient>
          <mask id="ccMask"><rect width="42" height="41" fill="url(#ccFade)" /></mask>
        </defs>
        <rect width="42" height="41" rx="8" fill="url(#ccTop)" />
        <rect width="42" height="41" rx="8" fill="url(#ccLow)" mask="url(#ccMask)" />
        <g fill="none" stroke="#fff" strokeWidth="2.500"><path d="M15 31a9 9 0 0 1-3-17c6-9 22-5 23 6 1 7-4 11-9 11z" /><path d="M27 26c-5 0-7-8-13-8-6 1-5 8 0 8 4 0 5-2 7-5s4-4 7-3c5 2 4 8-1 8" /></g>
      </svg>
    ),
  },
  { name: 'Audition', art: <Adobe $bg="#00005b" $fg="#9999ff">Au</Adobe> },
  { name: 'Photoshop', art: <Adobe $bg="#001e36" $fg="#31a8ff">Ps</Adobe> },
  { name: 'Dreamweaver', run: true, art: <Adobe $bg="#470137" $fg="#ff61f6">Dw</Adobe> },
  { name: 'Illustrator', art: <Adobe $bg="#330000" $fg="#ff9a00">Ai</Adobe> },
  { name: 'Animate', run: true, on: true, art: <Adobe $bg="#00005b" $fg="#9999ff">An</Adobe> },
  { name: 'Code', run: true, art: <svg width="50" height="48" viewBox="0 0 50 48"><path d="M36 0l14 6v36l-14 6L0 16l6-6z" fill="#1a86d0" /><path d="M36 0 0 32l6 6 30-24z" fill="#2497e3" /><path d="M36 0l14 6v36l-14 6z" fill="#3aaaf2" /><path d="M36 14v20L23 24z" fill="#1c1c1e" /><path d="M0 16l6-6 12 10-5 4z" fill="#0f6fb4" /></svg> },
  { name: 'YouTube', art: <svg width="44" height="32" viewBox="0 0 44 32"><rect width="44" height="32" rx="8" fill="#f00" /><path d="M17 9l12 7-12 7z" fill="#fff" /></svg> },
];

const hMarks = [200, 150, 100, 50, ...Array.from({ length: 18 }, (_, i) => i * 50)];
const vMarks = [50, ...Array.from({ length: 9 }, (_, i) => i * 50)];

/* ---------- page ---------- */

function SymbolDialog() {
  const nameRef = useRef<HTMLInputElement>(null);
  useEffect(() => {
    nameRef.current?.focus();
    nameRef.current?.select();
  }, []);
  return (
    <Dialog role="dialog" aria-label="Symbol Properties" onSubmit={e => e.preventDefault()}>
      <DialogTitle>
        Symbol Properties
        <IconButton type="button" aria-label="Close dialog"><Cross s={21} w={1.2} color="#000" /></IconButton>
      </DialogTitle>
      <DialogBody>
        <DialogMain>
          <Field>
            <FieldLabel $w={286} htmlFor="symbolName">Name:</FieldLabel>
            <NameBox ref={nameRef} id="symbolName" $w={546} defaultValue="galleryL" />
          </Field>
          <Field $top={20}>
            <FieldLabel $w={286} htmlFor="symbolType">Type:</FieldLabel>
            <SelectBox $w={216} $h={64} $bg={c.strip}>
              <select id="symbolType"><option>Movie Clip</option></select>
              <Chevron w={20} />
            </SelectBox>
          </Field>
          <Disclosure type="button"><Chevron w={20} />Advanced</Disclosure>
          <Check $left={40}><input type="checkbox" />Enable guides for 9-slice scaling</Check>
          <Groups>
            <Group>
              <legend>ActionScript Linkage</legend>
              <Checks>
                <Check $left={264}><input type="checkbox" defaultChecked />Export for ActionScript</Check>
                <Check $left={264}><input type="checkbox" defaultChecked />Export in frame 1</Check>
              </Checks>
              <Field>
                <FieldLabel $w={244} htmlFor="cls">Class:</FieldLabel>
                <TextBox id="cls" $w={420} defaultValue="emptyMovieClip" />
                <FieldIcons><CheckMark /><Pencil /></FieldIcons>
              </Field>
              <Field $top={20}>
                <FieldLabel $w={244} htmlFor="base">Base Class:</FieldLabel>
                <TextBox id="base" $w={420} />
                <FieldIcons><CheckMark /><Pencil /></FieldIcons>
              </Field>
            </Group>
            <Group>
              <legend>Runtime Shared Library</legend>
              <Checks>
                <Check $left={264}><input type="checkbox" />Export for runtime sharing</Check>
                <Check $left={264} $off><input type="checkbox" disabled />Import for runtime sharing</Check>
              </Checks>
              <Field>
                <FieldLabel $w={244} $off htmlFor="url">URL:</FieldLabel>
                <TextBox id="url" $w={546} disabled />
              </Field>
            </Group>
            <Group>
              <legend>Authortime Sharing</legend>
              <Share>
                <ShareButtons>
                  <BoxButton type="button">Source File...</BoxButton>
                  <BoxButton type="button" disabled>Symbol...</BoxButton>
                </ShareButtons>
                <ShareInfo>
                  <p>File:</p>
                  <p>Symbol name:</p>
                  <Check $off><input type="checkbox" disabled />Update automatically</Check>
                </ShareInfo>
              </Share>
            </Group>
          </Groups>
        </DialogMain>
        <Actions>
          <Pill>OK</Pill>
          <Pill type="button">Cancel</Pill>
          <Pill type="button">Edit</Pill>
        </Actions>
      </DialogBody>
    </Dialog>
  );
}

export default function App() {
  const [zoom, setZoom] = useState('100%');
  return (
    <>
      <Global />
      <Screen>
        <MenuBar>
          <svg width="36" height="30" viewBox="0 0 36 30"><path d="M18 0l18 17h-4v13H22V19h-8v11H4V17H0z" fill={c.icon} /></svg>
          <AppName>Animate</AppName>
          <Rule $h={40} />
          <Menus>
            {['File', 'Edit', 'View', 'Insert', 'Modify', 'Text', 'Commands', 'Control', 'Debug', 'Window', 'Help'].map(m => <span key={m}>{m}</span>)}
          </Menus>
          <Rule $h={40} $gap={24} />
          <BarIcons>
            <IconButton aria-label="Share" $mr={47}><svg width="32" height="34" viewBox="0 0 32 34"><path d="M8 11H1.500v21h29V11H24" fill="none" stroke="currentColor" strokeWidth="3" /><path d="M16 0l8 8h-6v13h-4V8H8z" fill="currentColor" /></svg></IconButton>
            <IconButton aria-label="Workspaces"><svg width="33" height="26" viewBox="0 0 33 26"><path d="M1 2h31v23H1z" fill="none" stroke="currentColor" strokeWidth="2" /><path d="M0 0h33v4H0zM5 7h5v13H5z" fill="currentColor" /><path d="M7 9h1v2H7zM7 13h1v2H7zM7 17h1v2H7z" fill="#1f1f1f" /></svg></IconButton>
            <Rule $h={48} $gap={32} />
            <IconButton aria-label="Play"><svg width="33" height="33" viewBox="0 0 33 33"><circle cx="16.500" cy="16.500" r="16" fill="currentColor" /><path d="M12 9l13 7.500L12 24z" fill="#1f1f1f" /></svg></IconButton>
          </BarIcons>
          <WindowButtons>
            <WindowButton $w={54} aria-label="Minimize"><svg width="21" height="30" viewBox="0 0 21 30"><path d="M0 18h21v6H0z" fill="#8c8c8c" /></svg></WindowButton>
            <WindowButton $w={54} aria-label="Restore"><svg width="26" height="22" viewBox="0 0 26 22" fill="none" stroke="#8c8c8c" strokeWidth="3"><path d="M2 9h13v11H2zM10 8V2h13v11h-7" /></svg></WindowButton>
            <WindowButton $w={94} aria-label="Close"><Cross s={20} w={1.8} /></WindowButton>
          </WindowButtons>
        </MenuBar>

        <Workspace>
          <ToolPanel>
            <Collapse><Double /></Collapse>
            <ToolTab><ToolTabName>T</ToolTabName><ToolTabMenu><Burger /></ToolTabMenu></ToolTab>
            <Tools>
              {groups.map((g, i) => (
                <React.Fragment key={i}>
                  {i > 0 && <ToolRule />}
                  {g.map(t => <Tool key={t.name} $on={t.on} aria-label={t.name}>{t.art}</Tool>)}
                </React.Fragment>
              ))}
              <MoreTools aria-label="More tools"><i /><i /><i /></MoreTools>
              <svg width="64" height="104" viewBox="0 0 64 104">
                <path d="M6 8h17v14H6z" fill="#000" stroke="#a8a8a8" strokeWidth="2" />
                <path d="M1 1h17v14H1z" fill="#000" stroke="#a8a8a8" strokeWidth="2" /><path d="M3 3h12v10H3z" fill="#fff" />
                <path d="M39 8l8-6v4c8 0 12 4 12 10h3l-6 8-7-8h4c0-4-3-6-6-6v4z" fill={c.icon} />
                <g strokeWidth="2" fill="#000" stroke="#fff"><path d="M22 60h40v40H22z" /><path d="M31 69h22v22H31z" fill="#1f1f1f" /><path d="M2 38h40v38H2z" /></g>
              </svg>
            </Tools>
          </ToolPanel>

          <Center>
            <DocTabs><DocTab>NEW_GALLERY_AS.fla*<Cross /></DocTab></DocTabs>
            <EditBar>
              <svg width="34" height="34" viewBox="0 0 34 34" fill={c.icon}><circle cx="16" cy="7" r="7" /><circle cx="7" cy="18" r="7" /><circle cx="25" cy="18" r="7" /><path d="M15 15h2c0 9 3 14 10 17H5c7-3 10-8 10-17zM34 28v5h-5z" /></svg>
              <Rule $h={48} $gap={30} />
              <SceneName>Scene 1</SceneName>
              <Chevron />
              <EditTools>
                <svg width="28" height="28" viewBox="0 0 28 28" fill="none" stroke={c.icon} strokeWidth="2"><path d="M5 6h18v16H5zM14 0v28M0 14h28" /></svg>
                <svg width="34" height="34" viewBox="0 0 34 34" fill="none" stroke={c.icon} strokeWidth="2"><path d="M4 10c0-5 4-7 8-7M9 0l4 3-4 3M21 6l12 13-12 11" /><path d="M3 17l5 5M8 12l3 10M13 9v11M18 11l-2 9M21 16l-3 7" strokeWidth="3" strokeLinecap="round" /><path d="M7 20h12c2 8-1 13-6 13-4 0-7-5-9-11z" fill={c.icon} stroke="none" /></svg>
                <svg width="30" height="31" viewBox="0 0 30 31" stroke={c.icon} strokeWidth="2"><path d="M1 1h28v29H1z" fill="none" strokeWidth="3" strokeDasharray="2 2" /><path d="M6 6h18v19H6z" fill="#1f1f1f" /></svg>
                <Zoomer>
                  <Spinner><Chevron up /><Chevron /></Spinner>
                  <ZoomInput aria-label="Zoom" value={zoom} onChange={e => setZoom(e.target.value)} />
                  <ZoomDrop aria-label="Zoom presets"><Chevron w={20} /></ZoomDrop>
                </Zoomer>
              </EditTools>
            </EditBar>
            <RulerRow><HRuler>{hMarks.map((m, i) => <HMark key={i}>{m}</HMark>)}</HRuler></RulerRow>
            <CanvasRow>
              <VRuler>{vMarks.map((m, i) => <VMark key={i}><span>{m}</span></VMark>)}</VRuler>
              <Canvas>
                <Stage />
                <StageArrow width="84" height="72" viewBox="0 0 84 72"><path d="M2 35 60 2v17h21v31H60v19z" fill="none" stroke="#6a6250" strokeWidth="1" /></StageArrow>
                <StageText>Web Design</StageText>
                <ScrollThumb $x={2148} $y={362} $w={8} $h={284} />
                <ScrollThumb $x={1000} $y={1026} $w={632} $h={8} />
              </Canvas>
            </CanvasRow>
            <OutputPanel>
              <PanelTabs>
                <PanelTab>Timeline</PanelTab><PanelTab $on>Output</PanelTab><PanelTab>Compiler Errors</PanelTab>
                <PanelMenu aria-label="Panel menu"><Burger /></PanelMenu>
              </PanelTabs>
              <OutputFrame>
                <OutputText>{'this url: not yet defined\nBasket Item: Deep Red Design Concept\nItem Number(addBasket): 1\nTitle: Deep Red Design Concept'}</OutputText>
                <VTrack><Chevron up w={12} h={8} s={3} color="#b4b4b4" /><Chevron w={12} h={8} s={3} color="#b4b4b4" /></VTrack>
                <HTrack><Side /><Side right /></HTrack>
              </OutputFrame>
            </OutputPanel>
          </Center>

          <Library>
            <Collapse $end><Double right /></Collapse>
            <PanelTabs>
              <PanelTab>Properties</PanelTab><PanelTab $on>Library</PanelTab><PanelTab>Assets</PanelTab><PanelTab>Align</PanelTab>
              <PanelMenu aria-label="Panel menu"><Burger /></PanelMenu>
            </PanelTabs>
            <FileRow>
              <SelectBox $h={38}>
                <select aria-label="Document"><option>NEW_GALLERY_AS.fla</option></select>
                <Chevron />
              </SelectBox>
              <svg width="34" height="16" viewBox="0 0 34 16"><path d="M0 7h12c2-3 5-4 8-4a8 8 0 1 1 0 10c-3 0-6-1-8-4H0z" fill="#b4b4b4" /></svg>
              <svg width="30" height="28" viewBox="0 0 30 28" fill="#6c6c6c" stroke="#a8a8a8" strokeWidth="2"><path d="M1 1h18v20H1z" fill="#3c3c3c" /><path d="M10 7h18v20H10z" /></svg>
            </FileRow>
            <Preview><div /></Preview>
            <FindRow>
              12 items
              <Find><Loupe s={24} color="#c8c8c8" w={3} /><input aria-label="Search library" /></Find>
            </FindRow>
            <LibTable>
              <thead>
                <HeadRow>
                  <th>Name<svg width="22" height="20" viewBox="0 0 22 20" fill="none" stroke={c.dim} strokeWidth="4"><path d="M11 0v17M2 9l9 8 9-8" /></svg></th>
                  <th>Linkage</th>
                  <th>Use Count</th>
                </HeadRow>
              </thead>
              <tbody>
                {items.map((it, i) => (
                  <Item key={i} $on={it.on}>
                    <td>
                      <ItemName $depth={it.depth}>
                        <Twist>{it.kind === 'folder' && <Chevron w={20} />}</Twist>
                        <ItemIcon>{art[it.kind]}</ItemIcon>
                        {it.name}
                      </ItemName>
                    </td>
                    <td>{it.link}</td>
                    <td>{it.uses}</td>
                  </Item>
                ))}
              </tbody>
            </LibTable>
            <LibFooter>
              <svg width="23" height="23" viewBox="0 0 23 23" fill="none" stroke="currentColor" strokeWidth="2"><path d="M1 1h21v21H1zM11.500 6v11M6 11.500h11" /></svg>
              <svg width="27" height="20" viewBox="0 0 28 20" fill="currentColor"><path d="M0 0h11l3 4h14v16H0z" /></svg>
              <InfoDot s={24} />
              <svg width="30" height="26" viewBox="0 0 32 26" fill="none" stroke="currentColor" strokeWidth="2"><path d="M4 6h24M7 6v19h18V6M12 5V1h8v4M12 10v11M16 10v11M20 10v11" /></svg>
              <FooterThumb />
            </LibFooter>
          </Library>

          <Dock>
            <DockHead><DockLine width="74" height="22" viewBox="0 0 74 22"><path d="M0 0l74 20" stroke="#080808" strokeWidth="3" /></DockLine><Double /></DockHead>
            {dock.map(d => <DockButton key={d.name} aria-label={d.name}>{d.art}</DockButton>)}
            <DockRest />
          </Dock>
        </Workspace>

        <Taskbar>
          <Start $w={96} aria-label="Start"><svg width="32" height="32" viewBox="0 0 32 32" fill="#fff"><path d="M0 4.500 13 2.700V15H0zM14.500 2.500 32 0v15H14.500zM0 16.500h13v12.300L0 27zM14.500 16.500H32V32l-17.500-2.500z" /></svg></Start>
          <SearchBox><Loupe /><input aria-label="Type here to search" placeholder="Type here to search" /></SearchBox>
          <Start $w={96} aria-label="Cortana"><svg width="34" height="34" viewBox="0 0 34 34"><circle cx="17" cy="17" r="14" fill="none" stroke="#f4f4f4" strokeWidth="4" /></svg></Start>
          <Start $w={96} aria-label="Task view"><svg width="34" height="32" viewBox="0 0 34 32" {...mono}><path d="M1 0v4h20V0M1 10h20v12H1zM1 32v-4h20v4M30 0v32" /><path d="M28 8h5v6h-5z" fill="#f4f4f4" stroke="none" /></svg></Start>
          <Apps>{taskApps.map(a => <AppButton key={a.name} $run={a.run} $on={a.on} aria-label={a.name}>{a.art}</AppButton>)}</Apps>
          <Scroller><Chevron up w={12} h={8} color="#5c5c5c" /><Chevron w={12} h={8} color="#5c5c5c" /></Scroller>
          <Tray>
            <Chevron up w={26} h={14} s={2} color="#f4f4f4" />
            <svg width="24" height="32" viewBox="0 0 24 32" {...mono}><rect x="1" y="8" width="15" height="16" rx="4" /><path d="M16 14l7-4v12l-7-4M4 3c3-2 7-2 10 0M4 29c3 2 7 2 10 0" /></svg>
            <svg width="36" height="26" viewBox="0 0 36 26" {...mono}><path d="M13 6h19v17H8v-4" /><path d="M14 10h15v10H14z" fill="#f4f4f4" stroke="none" /><path d="M33 12h2v6h-2zM3 0v4M9 0v4M1 5h10v4c0 3-2 4-5 4s-5-1-5-4zM6 13v9" strokeWidth="1.500" /></svg>
            <svg width="34" height="32" viewBox="0 0 34 32" {...mono}><path d="M33 16c0-2-2-3-5-3h-7L14 1h-4l4 12H7L4 9H1l2 7-2 7h3l3-4h7l-4 12h4l7-12h7c3 0 5-1 5-3z" /></svg>
            <svg width="34" height="26" viewBox="0 0 34 26" {...mono}><path d="M1 9h5l7-7v22l-7-7H1zM18 9c2 2 2 6 0 8" /><path d="M22 5c4 4 4 12 0 16M26 2c6 6 6 16 0 22" stroke="#8c8c8c" /></svg>
            <svg width="34" height="32" viewBox="0 0 34 32" {...mono}><path d="M25 2c3-2 7 1 5 5L17 25l-5 2 0-6zM12 20c-6-3-13 4-10 8 2 3 8 2 12-1M26 8c5 3 6 8 3 13" /></svg>
            <svg width="30" height="25" viewBox="0 0 30 25" {...mono}><path d="M1 1h28v23H1zM1 16h28M15 16v8" /></svg>
            <Clock>03:59<br />11/03/2022</Clock>
            <svg width="34" height="32" viewBox="0 0 34 32" {...mono}><path d="M1 1h32v23h-11l-5 6-5-6H1z" /></svg>
          </Tray>
          <ShowDesktop />
        </Taskbar>

        <SymbolDialog />
      </Screen>
    </>
  );
}
